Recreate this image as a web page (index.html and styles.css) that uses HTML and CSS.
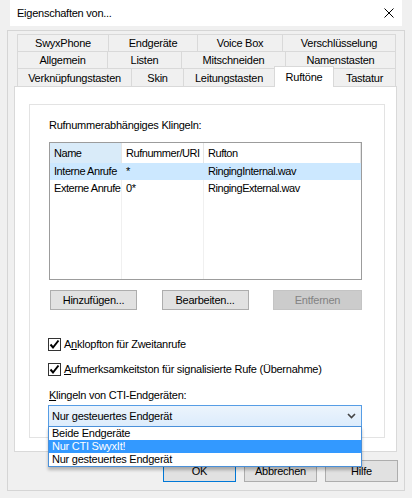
FILE: index.html
```html
<!DOCTYPE html>
<html lang="de">
  <head>
    <meta charset="UTF-8" />
    <title>Eigenschaften von...</title>
    <link rel="stylesheet" href="styles.css">
  </head>
  <body>
    <div class="screen">
      <div class="titlebar">
        <span class="title">Eigenschaften von...</span>
        <svg class="close" width="10" height="10" viewBox="0 0 10 10">
          <path d="M0.5 0.5 L9.5 9.5 M9.5 0.5 L0.5 9.5" stroke="#000" stroke-width="1" fill="none" />
        </svg>
      </div>

      <div class="frame">
        <div class="tabs">
          <div class="tabrow row1">
            <div class="tab">SwyxPhone</div>
            <div class="tab">Endgeräte</div>
            <div class="tab">Voice Box</div>
            <div class="tab">Verschlüsselung</div>
          </div>
          <div class="tabrow row2">
            <div class="tab">Allgemein</div>
            <div class="tab">Listen</div>
            <div class="tab">Mitschneiden</div>
            <div class="tab">Namenstasten</div>
          </div>
          <div class="tabrow row3">
            <div class="tab">Verknüpfungstasten</div>
            <div class="tab">Skin</div>
            <div class="tab">Leitungstasten</div>
            <div class="tab active">Ruftöne</div>
            <div class="tab">Tastatur</div>
          </div>
        </div>

        <div class="panel">
          <div class="inner">
            <div class="caption">Rufnummerabhängiges Klingeln:</div>

            <div class="list">
              <div class="lrow header">
                <div class="cell sorted">Name</div>
                <div class="cell">Rufnummer/URI</div>
                <div class="cell">Rufton</div>
              </div>
              <div class="lrow hover">
                <div class="cell">Interne Anrufe</div>
                <div class="cell">*</div>
                <div class="cell">RingingInternal.wav</div>
              </div>
              <div class="lrow">
                <div class="cell">Externe Anrufe</div>
                <div class="cell">0*</div>
                <div class="cell">RingingExternal.wav</div>
              </div>
              <div class="lrow filler">
                <div class="cell"></div>
                <div class="cell"></div>
                <div class="cell"></div>
              </div>
            </div>

            <div class="listbuttons">
              <button class="btn">Hinzufügen...</button>
              <button class="btn">Bearbeiten...</button>
              <button class="btn" disabled>Entfernen</button>
            </div>

            <label class="check first">
              <span class="box">
                <svg width="11" height="11" viewBox="0 0 11 11">
                  <path d="M1.5 5.5 L4 8.5 L9.5 1.5" stroke="#000" stroke-width="2" fill="none" />
                </svg>
              </span>
              <span>A<u>n</u>klopfton für Zweitanrufe</span>
            </label>
            <label class="check">
              <span class="box">
                <svg width="11" height="11" viewBox="0 0 11 11">
                  <path d="M1.5 5.5 L4 8.5 L9.5 1.5" stroke="#000" stroke-width="2" fill="none" />
                </svg>
              </span>
              <span><u>A</u>ufmerksamkeitston für signalisierte Rufe (Übernahme)</span>
            </label>

            <div class="caption cti"><u>K</u>lingeln von CTI-Endgeräten:</div>

            <div class="combo-wrap">
              <div class="combo">
                <span>Nur gesteuertes Endgerät</span>
                <svg width="9" height="6" viewBox="0 0 9 6">
                  <path d="M1 1 L4.5 4.5 L8 1" stroke="#444" stroke-width="1.6" fill="none" />
                </svg>
              </div>
              <div class="dropdown">
                <div class="item">Beide Endgeräte</div>
                <div class="item selected">Nur CTI SwyxIt!</div>
                <div class="item">Nur gesteuertes Endgerät</div>
              </div>
            </div>
          </div>
        </div>

        <div class="dialogbuttons">
          <button class="btn default">OK</button>
          <button class="btn">Abbrechen</button>
          <button class="btn">Hilfe</button>
        </div>
      </div>
    </div>
  </body>
</html>
```

FILE: styles.css
```css
html,
body {
  margin: 0;
  padding: 0;
  background: #f0f0f0;
  font-family: "Liberation Sans", Arial, sans-serif;
  font-size: 11px;
  letter-spacing: -0.25px;
  color: #000;
}

.screen {
  width: 412px;
  height: 498px;
  overflow: hidden;
}

.titlebar {
  margin-left: 10px;
  width: 392px;
  height: 26px;
  box-sizing: border-box;
  padding: 0 8px 0 7px;
  background: #fff;
  display: flex;
  align-items: center;
  justify-content: space-between;
}

.close {
  display: block;
}

.frame {
  margin: 4px 7px 0 7px;
  height: 461px;
  box-sizing: border-box;
  border: 1px solid #d5d5d5;
  padding: 3px 7px 0 6px;
}

/* tab strip */
.tabs {
  margin: 0 1px 0 3px;
}

.tabrow {
  display: grid;
  height: 17px;
}

.row1 {
  grid-template-columns: 91px 89px 85px 1fr;
}

.row2 {
  grid-template-columns: 90px 74px 104px 1fr;
}

.row3 {
  grid-template-columns: 114px 52px 91px 60px 1fr;
  height: 18px;
}

.tab {
  border: 1px solid #d9d9d9;
  border-right: none;
  border-bottom: none;
  background: #f0f0f0;
  display: flex;
  align-items: center;
  justify-content: center;
}

.tab:last-child {
  border-right: 1px solid #d9d9d9;
}

.tab.active {
  background: #fff;
  margin-top: -2px;
  margin-bottom: -1px;
  position: relative;
  z-index: 1;
  border-right: 1px solid #d9d9d9;
  padding-bottom: 1px;
}

.tab.active + .tab {
  border-left: none;
}

.panel {
  height: 366px;
  box-sizing: border-box;
  border: 1px solid #d9d9d9;
  background: #fff;
  padding: 17px 11px 13px 14px;
}

.inner {
  height: 100%;
  box-sizing: border-box;
  border: 1px solid #e3e3e3;
  padding: 14px 22px 0 19px;
}

.caption {
  line-height: 13px;
}

/* list view */
.list {
  margin-top: 10px;
  height: 138px;
  box-sizing: border-box;
  border: 1px solid #9c9c9c;
  display: flex;
  flex-direction: column;
}

.lrow {
  display: grid;
  grid-template-columns: 72px 82px 1fr;
  height: 17px;
}

.lrow .cell {
  padding-left: 4px;
  line-height: 17px;
  letter-spacing: -0.45px;
  white-space: nowrap;
  overflow: hidden;
  border-right: 1px solid #f0f0f0;
}

.lrow .cell:last-child {
  border-right: none;
}

.lrow.header {
  height: 20px;
}

.lrow.header .cell {
  line-height: 21px;
  border-right: 1px solid #e5e5e5;
}

.lrow.header .cell.sorted {
  background: #d9ebf9;
}

.lrow.hover {
  background: #cce8ff;
}

.lrow.hover .cell {
  border-right-color: #cce8ff;
}

.lrow.filler {
  flex: 1;
}

/* buttons */
.btn {
  font-family: inherit;
  font-size: 11px;
  letter-spacing: -0.25px;
  color: #000;
  background: #e1e1e1;
  border: 1px solid #adadad;
  padding: 0;
  margin: 0;
}

.btn:disabled {
  background: #cccccc;
  border-color: #c4c4c4;
  color: #838383;
}

.btn.default {
  border-color: #0078d7;
}

.listbuttons {
  margin: 10px 0 0 1px;
  display: flex;
  justify-content: space-between;
}

.listbuttons .btn {
  width: 87px;
  height: 20px;
}

.listbuttons .btn:last-child {
  width: 89px;
}

/* checkboxes */
.check {
  display: flex;
  align-items: center;
  gap: 3px;
  margin: 12px 0 0 -1px;
  line-height: 13px;
}

.check.first {
  margin-top: 28px;
}

.box {
  width: 11px;
  height: 11px;
  border: 1px solid #333;
  background: #fff;
  display: flex;
}

.caption.cti {
  margin-top: 13px;
}

/* combo box */
.combo-wrap {
  position: relative;
  margin: 3px 0 0 -1px;
}

.combo {
  height: 22px;
  box-sizing: border-box;
  border: 1px solid #569de5;
  background: linear-gradient(#ecf4fc, #dcecfc);
  display: flex;
  align-items: center;
  justify-content: space-between;
  padding: 0 5px 0 3px;
}

.dropdown {
  position: absolute;
  left: 0;
  right: 0;
  top: 21px;
  background: #fff;
  border: 1px solid #4a90d9;
  box-shadow: 0 3px 3px rgba(0, 0, 0, 0.25);
  z-index: 2;
}

.item {
  height: 13px;
  line-height: 13px;
  padding-left: 3px;
}

.item.selected {
  background: #3399ff;
  color: #fff;
}

/* dialog buttons */
.dialogbuttons {
  margin: 8px -1px 0 0;
  display: flex;
  justify-content: flex-end;
  gap: 8px;
}

.dialogbuttons .btn {
  width: 73px;
  height: 22px;
}
```
